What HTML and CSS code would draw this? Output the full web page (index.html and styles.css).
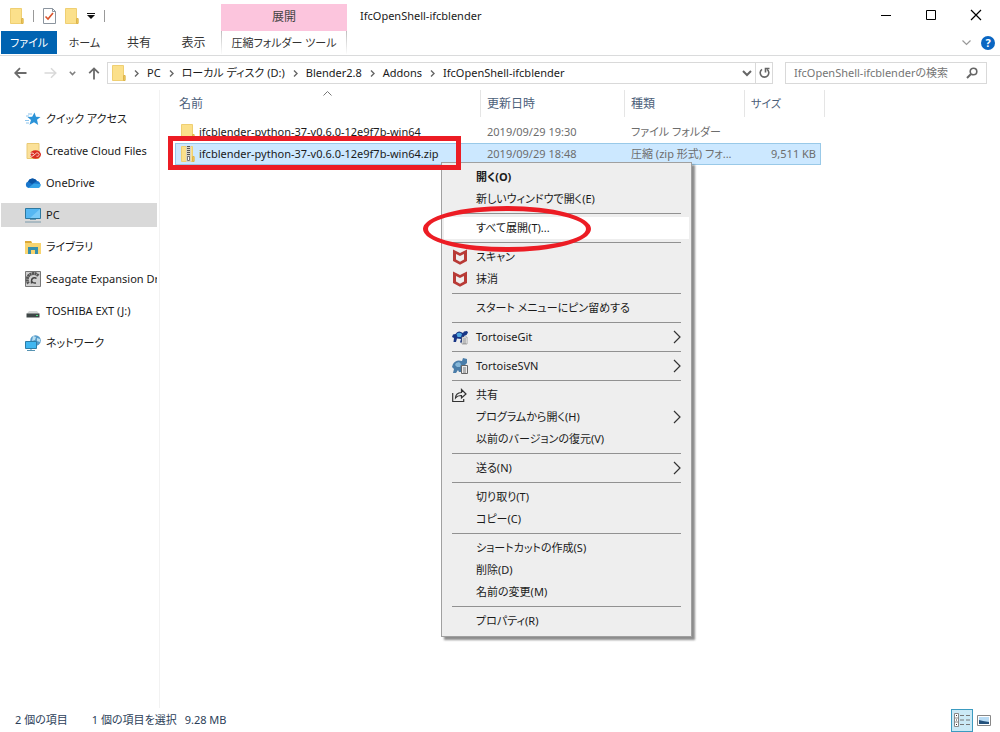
FILE: index.html
```
<!DOCTYPE html>
<html lang="ja">
<head>
<meta charset="utf-8">
<title>IfcOpenShell-ifcblender</title>
<link rel="stylesheet" href="styles.css">
</head>
<body>
<svg class="defs" aria-hidden="true">
  <defs>
    <symbol id="folder" viewBox="0 0 14 16">
      <path d="M.5.5h11v10h1.5v5H.5z" fill="#fbe08b" stroke="#efcf72"/>
      <path d="M11.5 10.5h1.5v5h-1.5z" fill="#f5cf62" stroke="#dcb44c"/>
    </symbol>
    <symbol id="crumb" viewBox="0 0 5 7"><path d="M1 .5l3 3-3 3" fill="none" stroke="#666" stroke-width="1.4"/></symbol>
    <symbol id="submenu" viewBox="0 0 8 14"><path d="M1 1l6 6-6 6" fill="none" stroke="#333" stroke-width="1.2"/></symbol>
    <symbol id="shield" viewBox="0 0 16 16"><path d="M1 .5l7 3.500L15 .5v11.500L8 15.800 1 12z" fill="#b83a36"/><path d="M4 5l4 2 4-2v5.500l-4 2.200-4-2.200z" fill="#eee"/></symbol>
  </defs>
</svg>

<header>
  <div class="titlebar">
    <div class="quick">
      <svg width="14" height="16"><use href="#folder"/></svg>
      <i class="tick"></i>
      <button aria-label="プロパティ"><svg width="13" height="16" viewBox="0 0 13 16"><path d="M.5.5h9l3 3v12H.500z" fill="#fff" stroke="#8b949e"/><path d="M9.500.5v3h3" fill="none" stroke="#8b949e"/><path d="M2.500 8.500l2.500 2.500 5-6" fill="none" stroke="#d9532c" stroke-width="1.600"/></svg></button>
      <button aria-label="新しいフォルダー"><svg width="14" height="16"><use href="#folder"/></svg></button>
      <button class="customize" aria-label="カスタマイズ"><svg width="8" height="6" viewBox="0 0 8 6"><path d="M0 0h8v1H0zM0 2h8L4 6z" fill="#111"/></svg></button>
      <i class="tick"></i>
    </div>
    <div class="context-title">展開</div>
    <h1>IfcOpenShell-ifcblender</h1>
    <div class="window-buttons">
      <button aria-label="最小化"><svg width="12" height="12" viewBox="0 0 12 12"><path d="M1 6.500h10" stroke="#000"/></svg></button>
      <button aria-label="最大化"><svg width="12" height="12" viewBox="0 0 12 12"><path d="M1.500 1.500h9v9h-9z" fill="none" stroke="#000"/></svg></button>
      <button aria-label="閉じる"><svg width="12" height="12" viewBox="0 0 12 12"><path d="M1 1l10 10M11 1L1 11" stroke="#000" stroke-width="1.200"/></svg></button>
    </div>
  </div>
  <nav class="tabs">
    <button class="file">ファイル</button>
    <button class="tab home">ホーム</button>
    <button class="tab">共有</button>
    <button class="tab view">表示</button>
    <button class="tools">圧縮フォルダー ツール</button>
    <span class="tabs-end">
      <button aria-label="リボンの展開"><svg width="9" height="6" viewBox="0 0 9 6"><path d="M.5.500l4 4 4-4" fill="none" stroke="#999" stroke-width="1.200"/></svg></button>
      <button class="help" aria-label="ヘルプ">?</button>
    </span>
  </nav>
</header>

<div class="address-row">
  <div class="nav-buttons">
    <button aria-label="戻る"><svg width="13" height="12" viewBox="0 0 13 12"><path d="M12.500 6H1.500M6 1.200L1.200 6 6 10.800" fill="none" stroke="#6b6b6b" stroke-width="1.800"/></svg></button>
    <button aria-label="進む"><svg width="13" height="12" viewBox="0 0 13 12"><path d="M.5 6h11M7 1.200L11.800 6 7 10.800" fill="none" stroke="#d9d9d9" stroke-width="1.500"/></svg></button>
    <button aria-label="履歴"><svg width="7" height="5" viewBox="0 0 7 5"><path d="M.8.800l2.700 2.700L6.200.800" fill="none" stroke="#808080" stroke-width="1.600"/></svg></button>
    <button aria-label="上へ"><svg width="12" height="13" viewBox="0 0 12 13"><path d="M6 12.500V1.500M1.200 6.200L6 1.400l4.800 4.800" fill="none" stroke="#6b6b6b" stroke-width="1.800"/></svg></button>
  </div>
  <div class="address">
    <svg width="14" height="16"><use href="#folder"/></svg>
    <svg width="5" height="7"><use href="#crumb"/></svg><a href="#">PC</a>
    <svg width="5" height="7"><use href="#crumb"/></svg><a href="#">ローカル ディスク (D:)</a>
    <svg width="5" height="7"><use href="#crumb"/></svg><a href="#">Blender2.8</a>
    <svg width="5" height="7"><use href="#crumb"/></svg><a href="#">Addons</a>
    <svg width="5" height="7"><use href="#crumb"/></svg><a href="#">IfcOpenShell-ifcblender</a>
    <button class="drop" aria-label="以前の場所"><svg width="10" height="7" viewBox="0 0 10 7"><path d="M1 1l4 4 4-4" fill="none" stroke="#666" stroke-width="2"/></svg></button>
    <button class="refresh" aria-label="更新"><svg width="11" height="12" viewBox="0 0 11 12"><path d="M3 2.300A4.300 4.300 0 1 0 8 2.300" fill="none" stroke="#666" stroke-width="1.600"/><path d="M6.500 5.500V1.500h4" fill="none" stroke="#666" stroke-width="1.600"/></svg></button>
  </div>
  <label class="search">
    <input type="text" placeholder="IfcOpenShell-ifcblenderの検索" aria-label="検索">
    <svg width="12" height="12" viewBox="0 0 12 12"><circle cx="7.500" cy="4.500" r="3.300" fill="none" stroke="#666" stroke-width="1.600"/><path d="M5 7L1 11" stroke="#666" stroke-width="2"/></svg>
  </label>
</div>

<main>
  <nav class="sidebar">
    <a href="#"><svg width="16" height="16" viewBox="0 0 16 16"><path d="M9.500 1.500l1.500 4.300 4.500.200-3.500 2.800L13.200 14 9 11.200 4.500 13.700 6 9 2.500 6l4.700-.200z" fill="#2b93d8"/><path d="M3 3h4M1 5h3M0 9.500h4M1 12h3" stroke="#8cc4ec"/></svg>クイック アクセス</a>
    <a href="#"><svg width="16" height="16" viewBox="0 0 16 16"><path d="M2 .5h12v15H2z" fill="#fbe199" stroke="#e9ca76"/><ellipse cx="10.500" cy="11.500" rx="5.500" ry="4.300" fill="#da2b20"/><path d="M9 11.500a2 1.600 0 1 0-1 1.500l3.500-3a2 1.700 0 1 1 0 3.200" fill="none" stroke="#fbd9cf"/></svg>Creative Cloud Files</a>
    <a href="#"><svg width="16" height="16" viewBox="0 0 16 16"><path d="M3.500 13A3.400 3.400 0 0 1 3 6.500 5 5 0 0 1 12 6a3.600 3.600 0 0 1 .8 7z" fill="#1976cc"/><path d="M3 6.500A5 5 0 0 1 12 6L7 9z" fill="#0b55a5"/><path d="M3 13l6-4.500 6.500.5a3 3 0 0 1-2.700 4z" fill="#35a3e8"/></svg>OneDrive</a>
    <a href="#" class="current"><svg width="16" height="16" viewBox="0 0 16 16"><path d="M.5 1.500h15v10H.500z" fill="#55b7f2" stroke="#2d789f"/><path d="M15 2L5 11h10z" fill="#7acbf8"/><path d="M5 12.500h6" stroke="#6698b4"/><path d="M0 15h16" stroke="#7b9aab"/></svg>PC</a>
    <a href="#"><svg width="16" height="16" viewBox="0 0 16 16"><path d="M0 2h6l1 2h9v11H0z" fill="#f8d46f"/><path d="M0 2h6l1 2H0z" fill="#dda937"/><path d="M3 8h10v7h-3v-4H6v4H3z" fill="#378fad"/></svg>ライブラリ</a>
    <a href="#"><svg width="16" height="16" viewBox="0 0 16 16"><path d="M.5.5h15v15H.500z" fill="#d0d0d0" stroke="#777"/><path d="M3.500 12.500A6 6 0 0 1 13.500 5" fill="none" stroke="#555" stroke-width="3" stroke-dasharray="2 .4"/><path d="M6.500 12.500V10a3 3 0 0 1 5-2.500M7 10.500q1 2 4 1.500" fill="none" stroke="#444" stroke-width="1.500"/></svg>Seagate Expansion Drive</a>
    <a href="#"><svg width="16" height="16" viewBox="0 0 16 16"><path d="M4 8h8l2.500 3h-13z" fill="#d4d6d6"/><path d="M1.500 10.500h13v4h-13z" fill="#3e4647"/><path d="M11 12.500h2" stroke="#49dc7b"/></svg>TOSHIBA EXT (J:)</a>
    <a href="#"><svg width="16" height="16" viewBox="0 0 16 16"><circle cx="10.500" cy="5.500" r="5.300" fill="#559bcb"/><path d="M8 1l3 1-1 3-3 1zM12 3l3 1v3l-3-1z" fill="#b9dff0"/><path d="M.5 6.500h11v7H.500z" fill="#41b7f1" stroke="#2d7da7"/><path d="M2 15.500h8M6 14v1" stroke="#5793b2"/></svg>ネットワーク</a>
  </nav>

  <section class="files">
    <table>
      <colgroup><col class="c-name"><col class="c-date"><col class="c-type"><col class="c-size"><col class="c-gutter"></colgroup>
      <thead>
        <tr>
          <th>名前<svg class="sort" width="9" height="5" viewBox="0 0 9 5"><path d="M.5 4.500l4-4 4 4" fill="none" stroke="#777"/></svg></th>
          <th>更新日時</th><th>種類</th><th colspan="2">サイズ</th>
        </tr>
      </thead>
      <tbody>
        <tr>
          <td><span class="name"><svg width="14" height="16"><use href="#folder"/></svg>ifcblender-python-37-v0.6.0-12e9f7b-win64</span></td>
          <td>2019/09/29 19:30</td><td>ファイル フォルダー</td><td></td>
        </tr>
        <tr class="selected">
          <td><span class="name"><svg width="14" height="16" viewBox="0 0 14 16"><use href="#folder"/><path d="M5 0h5v16H5z" fill="#d9d4c2"/><path d="M7.500 0v11" stroke="#555" stroke-width="3" stroke-dasharray="1 1"/><path d="M6.500 10.500h2v4h-2z" fill="#fff" stroke="#777"/></svg>ifcblender-python-37-v0.6.0-12e9f7b-win64.zip</span></td>
          <td>2019/09/29 18:48</td><td>圧縮 (zip 形式) フォ...</td><td>9,511 KB</td>
        </tr>
      </tbody>
    </table>
  </section>
</main>

<footer>
  <span>2 個の項目</span>
  <span class="picked">1 個の項目を選択</span>
  <span>9.28 MB</span>
  <div class="views">
    <button class="active" aria-label="詳細"><svg width="16" height="14" viewBox="0 0 16 14"><path d="M.5.5h4v13h-4zM.5 5h4M.5 9h4" fill="#fff" stroke="#888"/><path d="M6 2.500h4M12 2.500h4M6 7h4M12 7h4M6 11.500h4M12 11.500h4" stroke="#777"/><path d="M2 2.500h1M2 7h1M2 11.500h1" stroke="#333"/></svg></button>
    <button aria-label="大アイコン"><svg width="14" height="11" viewBox="0 0 14 11"><path d="M.5.5h13v10H.500z" fill="#fff" stroke="#888"/><path d="M2 2h10v7H2z" fill="#b9dcf5"/><path d="M2 5l4 1 6 1v2H2z" fill="#24527c"/></svg></button>
  </div>
</footer>

<div class="menu" role="menu">
  <button role="menuitem" class="default">開く(O)</button>
  <button role="menuitem">新しいウィンドウで開く(E)</button>
  <hr>
  <button role="menuitem" class="hover">すべて展開(T)...</button>
  <hr>
  <button role="menuitem"><svg class="icon"><use href="#shield"/></svg>スキャン</button>
  <button role="menuitem"><svg class="icon"><use href="#shield"/></svg>抹消</button>
  <hr>
  <button role="menuitem">スタート メニューにピン留めする</button>
  <hr>
  <button role="menuitem"><svg class="icon" viewBox="0 0 16 16"><path d="M1 5.500l2.500-.5Q6 .5 11 4l1-1.500 3-.5 1 1.500-1.500 2.500-2.500 1v3.500l-2 3H8L9 10 5 9.500 4 13H1.500L2 9 0 8z" fill="#173585"/><path d="M4.500 5q2.500-2.500 5.500 0L9 8H5.500z" fill="#4ea6df"/><path d="M10 8h5v7h-5z" fill="#fff" stroke="#777" stroke-width=".6"/><path d="M11 10h3M11 12h3M11 14h3" stroke="#555" stroke-width=".8"/></svg>TortoiseGit<svg class="arrow"><use href="#submenu"/></svg></button>
  <hr>
  <button role="menuitem"><svg class="icon" viewBox="0 0 16 16"><path d="M1 6q3-5 9-3l1-3 4 1v4l-3 3-2 6H7l-1-2-2 3H1l1-4-2-2z" fill="#4a7da9"/><path d="M4 5l3-1 2 2-1 3H5L3 7z" fill="#86b7d8"/><path d="M9.500 7.500h6v8h-6z" fill="#eee" stroke="#666"/><path d="M11 10h3M11 12h3M11 14h3" stroke="#555" stroke-width=".8"/></svg>TortoiseSVN<svg class="arrow"><use href="#submenu"/></svg></button>
  <hr>
  <button role="menuitem"><svg class="icon" viewBox="0 0 16 16"><path d="M.7 6v8.500h11V12M3.500 11q0-5 6-5.500V2.500L14 7l-4.500 4V8.500q-4-.2-6 2.500z" fill="none" stroke="#333" stroke-width="1.200"/></svg>共有</button>
  <button role="menuitem">プログラムから開く(H)<svg class="arrow"><use href="#submenu"/></svg></button>
  <button role="menuitem">以前のバージョンの復元(V)</button>
  <hr>
  <button role="menuitem">送る(N)<svg class="arrow"><use href="#submenu"/></svg></button>
  <hr>
  <button role="menuitem">切り取り(T)</button>
  <button role="menuitem">コピー(C)</button>
  <hr>
  <button role="menuitem">ショートカットの作成(S)</button>
  <button role="menuitem">削除(D)</button>
  <button role="menuitem">名前の変更(M)</button>
  <hr>
  <button role="menuitem">プロパティ(R)</button>
</div>

<div class="mark-box"></div>
<div class="mark-ellipse"></div>
</body>
</html>
```
FILE: styles.css
```
* { box-sizing: border-box; }
body {
  margin: 0;
  min-height: 100vh;
  display: flex;
  flex-direction: column;
  position: relative;
  background: #fff;
  color: #1a1a1a;
  font: 11px/16px "Noto Sans", "Noto Sans CJK JP", sans-serif;
  font-feature-settings: "palt";
}
button, input {
  font: inherit;
  font-feature-settings: inherit;
  color: inherit;
  background: none;
  border: 0;
  padding: 0;
  margin: 0;
}
button svg, td svg { display: block; }
a { color: inherit; text-decoration: none; }
svg { flex: none; }
.defs { position: absolute; width: 0; height: 0; }

.titlebar { display: flex; height: 31px; }
.quick { display: flex; align-items: center; width: 221px; padding-left: 10px; gap: 9px; }
.customize { margin-left: -1px; }
.tick { width: 1px; height: 12px; background: #999; }
.context-title {
  width: 126px;
  margin-top: 4px;
  line-height: 26px;
  font-size: 12px;
  text-align: center;
  color: #444;
  background: #fcc5dd;
}
h1 { flex: 1; margin: 0; padding-left: 13px; font-size: 11px; font-weight: 400; line-height: 32px; }
.window-buttons { display: flex; padding-right: 2px; }
.window-buttons button { display: grid; place-items: center; width: 45px; padding-bottom: 1px; }

.tabs { display: flex; height: 25px; padding-left: 1px; border-bottom: 1px solid #dadbdc; }
.tabs > button { height: 23px; }
.file { width: 56px; color: #fff; background: #0063b1; }
.tab { width: 54px; color: #333; font-size: 12px; }
.tab.home { width: 55px; font-size: 11px; }
.tab.view { width: 55px; }
.tools {
  width: 126px;
  color: #333;
  border: solid;
  border-width: 0 1px;
  border-image: linear-gradient(#bbb, #fff) 1;
}
.tabs-end { display: flex; align-items: center; gap: 10px; margin-left: auto; padding-right: 5px; }
.help {
  width: 14px;
  height: 14px;
  border-radius: 50%;
  line-height: 14px;
  font-weight: 700;
  text-align: center;
  color: #fff;
  background: #0a66c2;
}

.address-row { display: flex; padding: 6px 13px 6px 14px; }
.nav-buttons { display: flex; align-items: center; width: 93px; }
.nav-buttons button + button { margin-left: 17px; }
.nav-buttons button:nth-child(n + 3) { margin-left: 12px; }
.address { flex: 1; display: flex; align-items: center; height: 22px; padding-left: 4px; gap: 8px; border: 1px solid #d9d9d9; }
.drop { margin-left: auto; }
.refresh { display: grid; place-items: center; width: 17px; height: 20px; margin-left: -5px; border-left: 1px solid #d9d9d9; }
.search { display: flex; align-items: center; width: 202px; margin-left: 12px; padding: 0 8px; border: 1px solid #d9d9d9; }
.search input { flex: 1; min-width: 0; outline: 0; }
.search input::placeholder { color: #757575; opacity: 1; }

main { flex: 1; display: flex; }
.sidebar { display: flex; flex-direction: column; gap: 8px; width: 160px; padding: 17px 2px 0 1px; border-right: 1px solid #f2f2f2; }
.sidebar a { display: flex; align-items: center; gap: 5px; height: 24px; padding-left: 24px; overflow: hidden; white-space: nowrap; }
.sidebar .current { background: #d9d9d9; }

.files { flex: 1; min-width: 0; padding: 0 0 0 15px; }
table { table-layout: fixed; width: 650px; border-collapse: separate; border-spacing: 0; }
.c-name { width: 306px; }
.c-date { width: 144px; }
.c-type { width: 120px; }
.c-size { width: 76px; }
.c-gutter { width: 4px; }
th {
  position: relative;
  height: 27px;
  padding: 0 0 0 6px;
  border-right: 1px solid #e5e5e5;
  font-size: 12px;
  font-weight: 400;
  text-align: left;
  color: #4c607a;
}
th:first-child { padding-left: 4px; }
th:last-child { font-size: 11px; }
.sort { position: absolute; top: 1px; left: 50%; margin-left: -5px; }
thead::after { content: ""; display: block; height: 4px; }
td { height: 22px; padding: 0 0 0 6px; color: #6d6d6d; white-space: nowrap; }
td:first-child { color: #1a1a1a; }
td:last-child { padding-right: 4px; text-align: right; }
.name { display: flex; align-items: center; gap: 4px; }
.selected td { background: #cce8ff; border: solid #99c9e8; border-width: 1px 0; }
.selected td:first-child { border-left-width: 1px; padding-left: 5px; }
.selected td:last-child { border-right-width: 1px; }

footer { display: flex; align-items: center; height: 24px; padding: 0 9px 0 15px; color: #2c3e58; }
.picked { margin: 0 8px 0 24px; }
.views { display: flex; align-items: center; gap: 4px; margin-left: auto; }
.views .active { display: grid; place-items: center; width: 22px; height: 23px; background: #cbe9f6; border: 1px solid #3b9bc0; }

.menu {
  position: absolute;
  left: 441px;
  top: 162px;
  width: 251px;
  padding: 3px 2px 4px;
  background: #eee;
  border: 1px solid #a0a0a0;
  box-shadow: 3px 3px 2px rgba(0, 0, 0, .45);
}
.menu button { display: flex; align-items: center; position: relative; width: 100%; height: 22px; padding-left: 32px; text-align: left; white-space: nowrap; }
.menu hr { height: 1px; margin: 3px 8px; border: 0; background: #919191; }
.menu .default { font-weight: 700; }
.menu .hover { background: #fff; }
.icon { position: absolute; left: 8px; top: 3px; width: 16px; height: 16px; }
.arrow { width: 8px; height: 14px; margin-left: auto; margin-right: 8px; }

.mark-box { position: absolute; left: 168px; top: 136px; width: 293px; height: 34px; border: 5px solid #ec1c24; pointer-events: none; }
.mark-ellipse { position: absolute; left: 423px; top: 206px; width: 168px; height: 46px; border: 5px solid #ec1c24; border-radius: 50%; pointer-events: none; }
```
